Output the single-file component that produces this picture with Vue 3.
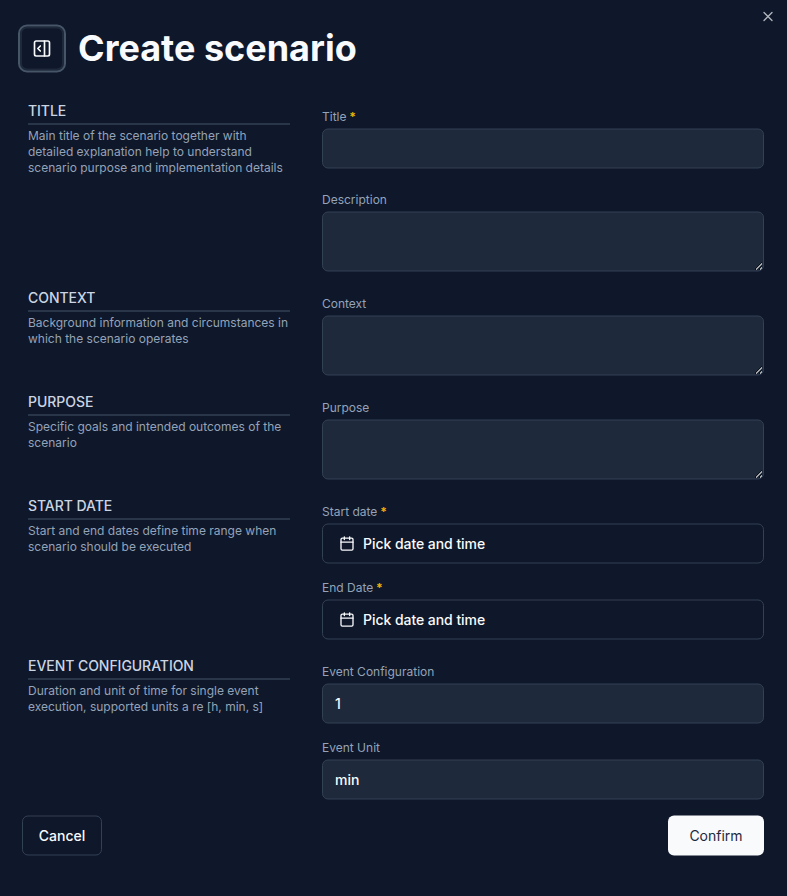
<script setup>
import { ref } from 'vue'

const sections = ref([
  {
    title: 'Title',
    text: 'Main title of the scenario together with detailed explanation help to understand scenario purpose and implementation details',
    roomy: true,
    fields: [
      { label: 'Title', type: 'input', required: true, value: '' },
      { label: 'Description', type: 'area', value: '' },
    ],
  },
  {
    title: 'Context',
    text: 'Background information and circumstances in which the scenario operates',
    fields: [{ label: 'Context', type: 'area', value: '' }],
  },
  {
    title: 'Purpose',
    text: 'Specific goals and intended outcomes of the scenario',
    fields: [{ label: 'Purpose', type: 'area', value: '' }],
  },
  {
    title: 'Start date',
    text: 'Start and end dates define time range when scenario should be executed',
    fields: [
      { label: 'Start date', type: 'date', required: true },
      { label: 'End Date', type: 'date', required: true },
    ],
  },
  {
    title: 'Event configuration',
    text: 'Duration and unit of time for single event execution, supported units a re [h, min, s]',
    fields: [
      { label: 'Event Configuration', type: 'input', value: '1' },
      { label: 'Event Unit', type: 'input', value: 'min' },
    ],
  },
])
</script>

<template>
  <main class="dialog">
    <button class="close" aria-label="Close">
      <svg width="16" height="16" viewBox="0 0 24 24" fill="none" stroke="currentColor" stroke-width="2" stroke-linecap="round" stroke-linejoin="round">
        <path d="M18 6 6 18M6 6l12 12" />
      </svg>
    </button>

    <header class="header">
      <button class="toggle" aria-label="Toggle panel">
        <svg width="20" height="20" viewBox="0 0 24 24" fill="none" stroke="currentColor" stroke-width="2" stroke-linecap="round" stroke-linejoin="round">
          <rect x="3" y="3" width="18" height="18" rx="2" />
          <path d="M15 3v18M10 15l-3-3 3-3" />
        </svg>
      </button>
      <h1>Create scenario</h1>
    </header>

    <form class="form" @submit.prevent>
      <section v-for="s in sections" :key="s.title" class="section" :class="{ roomy: s.roomy }">
        <div class="info">
          <h2>{{ s.title }}</h2>
          <p>{{ s.text }}</p>
        </div>
        <div class="fields">
          <div v-for="f in s.fields" :key="f.label" class="field">
            <label>{{ f.label }}<span v-if="f.required" class="star"> *</span></label>
            <input v-if="f.type === 'input'" v-model="f.value" class="control" />
            <textarea v-else-if="f.type === 'area'" v-model="f.value" class="control area"></textarea>
            <button v-else class="control date" type="button">
              <svg width="16" height="16" viewBox="0 0 24 24" fill="none" stroke="currentColor" stroke-width="2" stroke-linecap="round" stroke-linejoin="round">
                <path d="M8 2v4M16 2v4M3 10h18" />
                <rect x="3" y="4" width="18" height="18" rx="2" />
              </svg>
              Pick date and time
            </button>
          </div>
        </div>
      </section>

      <footer class="footer">
        <button class="btn cancel" type="button">Cancel</button>
        <button class="btn confirm" type="submit">Confirm</button>
      </footer>
    </form>
  </main>
</template>

<style>
body {
  background: #0f172a;
  color-scheme: dark;
}
</style>

<style scoped>
* {
  box-sizing: border-box;
  margin: 0;
}
.dialog {
  position: relative;
  min-height: 896px;
  padding: 24px 23px 0 18px;
  background: #0f172a;
  color: #f8fafc;
  font-family: Inter, "Liberation Sans", sans-serif;
}
button,
input,
textarea {
  font: inherit;
  color: inherit;
}
svg {
  display: block;
  flex: none;
}
.close {
  position: absolute;
  top: 8px;
  right: 11px;
  padding: 0;
  border: 0;
  background: none;
  opacity: 0.7;
}
.close,
.toggle,
.control,
.btn {
  transform: translateY(0.5px);
}
.header {
  display: flex;
  align-items: center;
  gap: 12px;
  height: 48px;
}
.toggle {
  display: grid;
  place-items: center;
  width: 48px;
  height: 48px;
  padding: 0;
  border: 2px solid #475569;
  border-radius: 9px;
  background: none;
  box-shadow: inset 0 0 0 2px #1e293b;
}
h1 {
  font-size: 36px;
  line-height: 40px;
  font-weight: 700;
}
.form {
  padding-top: 27px;
}
.section {
  display: grid;
  grid-template-columns: 262px 442px;
  column-gap: 32px;
  padding: 0 0 15px 10px;
}
.section:last-of-type {
  padding-bottom: 16px;
}
h2 {
  height: 26px;
  border-bottom: 2px solid #293548;
  color: #cbd5e1;
  font-size: 14px;
  line-height: 24px;
  font-weight: 500;
  letter-spacing: -0.05px;
  text-transform: uppercase;
}
p {
  padding-top: 3px;
  color: #94a3b8;
  font-size: 12px;
  line-height: 16px;
}
.fields {
  display: flex;
  flex-direction: column;
  gap: 16px;
  padding-top: 9px;
}
.roomy .fields {
  gap: 23px;
}
.field {
  display: flex;
  flex-direction: column;
}
label {
  height: 20px;
  color: #94a3b8;
  font-size: 12px;
  line-height: 18px;
}
.star {
  color: #eab308;
  font-weight: 700;
}
.control {
  display: block;
  width: 100%;
  height: 40px;
  padding: 7px 12px 9px;
  border: 1px solid #334155;
  border-radius: 6px;
  background: #1e293b;
  font-size: 14px;
  line-height: 20px;
  font-weight: 500;
  outline: none;
}
.area {
  height: 60px;
  resize: vertical;
}
.date {
  display: flex;
  align-items: center;
  gap: 8px;
  padding: 0 16px;
  background: transparent;
  letter-spacing: -0.05px;
}
.footer {
  display: flex;
  justify-content: space-between;
  padding-left: 4px;
}
.btn {
  height: 40px;
  border: 1px solid #334155;
  border-radius: 6px;
  background: none;
  font-size: 14px;
  line-height: 20px;
  font-weight: 500;
}
.cancel {
  width: 80px;
}
.confirm {
  width: 96px;
  border: 0;
  background: #f8fafc;
  color: #1e293b;
  font-weight: 400;
}
</style>
